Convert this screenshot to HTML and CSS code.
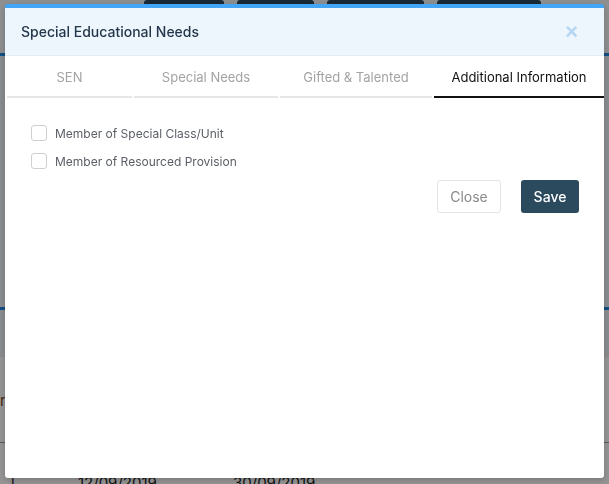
FILE: index.html
```html
<!DOCTYPE html>
<html lang="en">
<head>
  <meta charset="UTF-8" />
  <meta name="viewport" content="width=device-width, initial-scale=1.0"/>
  <title>Special Educational Needs</title>
  <link rel="stylesheet" href="styles.css">
</head>
<body>
  <div class="page">
    <div class="toolbar">
      <span class="tool-btn w80"></span>
      <span class="tool-btn w77"></span>
      <span class="tool-btn w97"></span>
      <span class="tool-btn w104"></span>
    </div>
    <div class="page-rule"></div>
    <div class="panel">
      <div class="panel-rule"></div>
    </div>
    <div class="page-text">ri</div>
    <div class="page-row">
      <span>l</span>
      <span>12/09/2019</span>
      <span>30/09/2019</span>
    </div>
  </div>

  <div class="backdrop">
    <div class="modal">
      <div class="modal-header">
        <h3>Special Educational Needs</h3>
        <button class="close-x">&times;</button>
      </div>

      <div class="tabs">
        <div class="tab">SEN</div>
        <div class="tab">Special Needs</div>
        <div class="tab">Gifted &amp; Talented</div>
        <div class="tab active">Additional Information</div>
      </div>

      <div class="modal-body">
        <label class="check"><input type="checkbox" /> <span>Member of Special Class/Unit</span></label>
        <label class="check"><input type="checkbox" /> <span>Member of Resourced Provision</span></label>

        <div class="actions">
          <button class="btn btn-close">Close</button>
          <button class="btn btn-save">Save</button>
        </div>
      </div>
    </div>
  </div>
</body>
</html>
```

FILE: styles.css
```css
body {
  margin: 0;
  font-family: Inter, "Noto Sans", sans-serif;
  background: #fff;
  height: 484px;
  overflow: hidden;
}

/* page behind the modal */
.page {
  height: 484px;
  position: relative;
}
.toolbar {
  display: flex;
  gap: 13px;
  padding-left: 144px;
  height: 53px;
  background: #f4f6f9;
}
.tool-btn {
  display: block;
  height: 30px;
  background: #2c4a5e;
  border-radius: 3px;
}
.w80 { width: 80px; }
.w77 { width: 77px; }
.w97 { width: 97px; }
.w104 { width: 104px; }
.page-rule {
  height: 3px;
  background: #1e88e5;
}
.panel {
  height: 301px;
  background: #eef2f6;
  padding-top: 251px;
  box-sizing: border-box;
}
.panel-rule {
  height: 3px;
  background: #1e88e5;
}
.page-text {
  margin-top: 34px;
  color: #7a4a1a;
  font-size: 15px;
}
.page-row {
  border-top: 1px solid #999;
  margin-top: 32px;
  padding: 30px 0 0 11px;
  display: grid;
  grid-template-columns: 67px 155px auto;
  color: #222;
  font-size: 15px;
}

.backdrop {
  position: fixed;
  inset: 0;
  background: rgba(0, 0, 0, 0.42);
}

.modal {
  width: 599px;
  height: 474px;
  margin: 4px auto 0 5px;
  background: #fff;
  border-top: 4px solid #42a5f5;
  border-radius: 3px;
  box-sizing: border-box;
  box-shadow: 0 2px 6px rgba(0,0,0,0.2);
  overflow: hidden;
}
.modal-header {
  height: 48px;
  background: #edf5fd;
  display: flex;
  align-items: center;
  justify-content: space-between;
  padding: 0 26px 0 16px;
  border-bottom: 1px solid #e4ecf3;
  box-sizing: border-box;
}
.modal-header h3 {
  margin: 0;
  font-size: 14px;
  font-weight: 500;
  color: #24364a;
}
.close-x {
  border: none;
  background: none;
  color: #b4d6f2;
  font-size: 22px;
  font-weight: 600;
  line-height: 1;
  padding: 0;
  cursor: pointer;
}

.tabs {
  display: grid;
  grid-template-columns: 125px 144px 152px 1fr;
  gap: 2px;
  padding-left: 2px;
  margin-top: 1px;
}
.tab {
  height: 41px;
  box-sizing: border-box;
  display: flex;
  align-items: center;
  justify-content: center;
  padding-top: 1px;
  font-size: 13px;
  color: #a3a3a3;
  border-bottom: 2px solid #e6e6e6;
}
.tab.active {
  color: #111;
  border-bottom-color: #111;
}

.modal-body {
  padding: 21px 25px 0 26px;
}
.check {
  display: flex;
  align-items: center;
  height: 28px;
  font-size: 12px;
  color: #5a5f66;
}
.check input {
  appearance: none;
  width: 16px;
  height: 16px;
  margin: 0 8px 0 0;
  border: 1px solid #cfcfcf;
  border-radius: 3px;
  background: #fff;
}
.actions {
  display: flex;
  justify-content: flex-end;
  gap: 20px;
  margin-top: 5px;
}
.btn {
  height: 33px;
  font-family: inherit;
  font-size: 14px;
  border-radius: 3px;
  cursor: pointer;
}
.btn-close {
  width: 64px;
  background: #fff;
  border: 1px solid #e3e3e3;
  color: #8a8a8a;
}
.btn-save {
  width: 58px;
  background: #2c4a5e;
  border: none;
  color: #fff;
  font-weight: 500;
}
```
